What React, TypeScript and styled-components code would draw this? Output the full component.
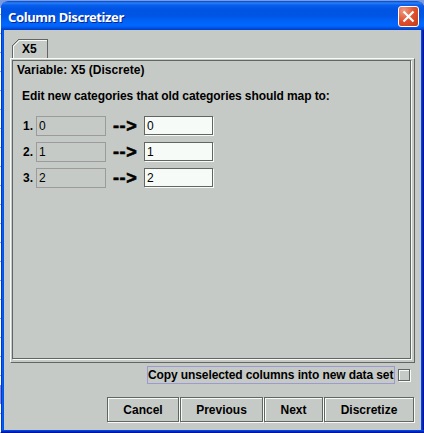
import React from "react";
import styled, { createGlobalStyle } from "styled-components";

const GlobalStyle = createGlobalStyle`
  * { box-sizing: border-box; }
  body { margin: 0; overflow: hidden; background: #fff; }
  button, input { font: inherit; border-radius: 0; appearance: none; }
`;

const face = "#c6cac6";
const dark = "#636563";
const light = "#f7fbf7";

const Desktop = styled.div`
  width: 424px;
  height: 433px;
  padding-left: 1px;
  overflow: hidden;
  background:
    linear-gradient(#7b9ae0, #7b9ae0) 0 0 / 100% 8px no-repeat,
    linear-gradient(#8e8cc8, #8e8cc8) 0 385px / 1px 19px no-repeat,
    repeating-linear-gradient(#fff 0 14px, #a5a6a5 14px 15px, #fff 15px 19px);
  font: bold 12px/14px "Liberation Sans", Arial, sans-serif;
  color: #000;
`;

const Window = styled.main`
  display: flex;
  flex-direction: column;
  margin-top: 1px;
  width: 423px;
  height: 432px;
  border-radius: 7px 7px 0 0;
  overflow: hidden;
  background: linear-gradient(90deg, #0034d6 0 1px, #0061f7 1px 2px, #0055e7 2px 3px, ${face} 3px 420px, #0045e7 420px 421px, #0028c6 421px 422px, #001694 422px);
`;

const TitleBar = styled.header`
  display: flex;
  flex: none;
  align-items: center;
  justify-content: space-between;
  height: 29px;
  padding: 0 5px 0 7px;
  background: linear-gradient(#0046c8 0, #2a80f8 2px, #0860ee 4px, #0054e3 8px, #0055e5 15px, #0064fa 21px, #0066ff 25px, #0052e0 27px, #003cc6 29px);
`;

const Title = styled.h1`
  margin: 3px 0 0;
  font: bold 13px/18px "Noto Sans", "Open Sans", sans-serif;
  letter-spacing: -0.38px;
  white-space: nowrap;
  color: #fff;
  text-shadow: 1px 1px 0 #06238c;
`;

const CloseButton = styled.button`
  display: grid;
  place-items: center;
  width: 21px;
  height: 21px;
  margin-top: 2px;
  padding: 0;
  border: 1px solid #fff;
  border-radius: 3px;
  background: radial-gradient(circle at 25% 20%, #ee9a80, #e05030 50%, #c43a12);
`;

const Body = styled.div`
  display: flex;
  flex: 1;
  flex-direction: column;
  margin: 0 3px;
  padding: 9px 6px 0;
`;

const Tab = styled.div`
  position: relative;
  width: 37px;
  height: 19px;
  margin-left: 2px;
  padding: 3px 0 0 10px;
`;

const TabOutline = styled.svg`
  position: absolute;
  left: 0;
  top: 0;
`;

const Panel = styled.section`
  width: 405px;
  height: 305px;
  padding: 1px;
  border: 1px solid;
  border-color: ${light} ${dark} ${dark} ${light};
`;

const etched = `
  border: 1px solid ${dark};
  box-shadow: 1px 1px 0 ${light}, inset 1px 1px 0 ${light};
`;

const PanelInner = styled.div`
  width: 399px;
  height: 299px;
  padding: 2px 4px;
  border: 1px solid ${dark};
  box-shadow: 1px 1px 0 ${light};
`;

const Label = styled.p<{ $spacing: number; $indent?: number; $top?: number }>`
  margin: ${(p) => p.$top ?? 0}px 0 0 ${(p) => p.$indent ?? 0}px;
  letter-spacing: ${(p) => p.$spacing}px;
  white-space: nowrap;
`;

const Rows = styled.div`
  display: grid;
  gap: 6px;
  margin: 13px 0 0 6px;
`;

const Row = styled.div`
  display: grid;
  grid-template-columns: 13px 70px 38px 70px;
  align-items: center;
  height: 20px;
`;

const Arrow = styled.span`
  padding-left: 7px;
  font-size: 18px;
  line-height: 18px;
  letter-spacing: 0.6px;
  white-space: nowrap;
  -webkit-text-stroke: 0.6px #000;
`;

const Field = styled.input`
  width: 69px;
  height: 19px;
  margin-bottom: 1px;
  padding: 1px 2px 0;
  outline: 0;
  border: 1px solid ${dark};
  box-shadow: 1px 1px 0 ${light};
  background: ${light};
  color: #000;
  font: 12px/14px "Liberation Sans", Arial, sans-serif;

  &:disabled {
    width: 70px;
    height: 20px;
    margin-bottom: 0;
    padding: 0 2px 1px;
    border-color: #9c9a9c;
    box-shadow: none;
    background: ${face};
  }
`;

const Option = styled.label`
  display: flex;
  align-items: center;
  justify-content: flex-end;
  gap: 3px;
  margin: 3px 4px 0 0;
`;

const OptionText = styled.span`
  width: 248px;
  height: 18px;
  padding: 1px 0 0;
  border: 1px solid #9c9ace;
  letter-spacing: -0.1px;
  white-space: nowrap;
`;

const CheckBox = styled.input`
  width: 12px;
  height: 12px;
  margin: 0 1px 0 0;
  ${etched}
`;

const Actions = styled.footer`
  display: flex;
  justify-content: flex-end;
  gap: 1px;
  margin: 13px 1px 0 0;
`;

const ActionButton = styled.button<{ $width: number }>`
  width: ${(p) => p.$width}px;
  height: 25px;
  padding: 1px 0 0;
  background: ${face};
  color: #000;
  white-space: nowrap;
  ${etched}
`;

const BottomEdge = styled.div`
  flex: none;
  height: 3px;
  background: linear-gradient(#0045e7 0 1px, #0028c6 1px 2px, #001694 2px);
`;

const categories = ["0", "1", "2"];
const actions = [
  { label: "Cancel", width: 72 },
  { label: "Previous", width: 83 },
  { label: "Next", width: 59 },
  { label: "Discretize", width: 90 },
];

export default function App() {
  return (
    <Desktop>
      <GlobalStyle />
      <Window>
        <TitleBar>
          <Title>Column Discretizer</Title>
          <CloseButton aria-label="Close">
            <svg width="13" height="13" viewBox="0 0 13 13">
              <path d="M1.5 1.5 11.5 11.5M11.5 1.5 1.5 11.5" stroke="#fff" strokeWidth="2.2" />
            </svg>
          </CloseButton>
        </TitleBar>
        <Body>
          <Tab>
            <TabOutline width="37" height="19" shapeRendering="crispEdges" fill="none">
              <path d="M1.5 19V7.5L7.5 1.5H35" stroke={light} />
              <path d="M0.5 19V6.5L6.5 0.5H35.5V19" stroke={dark} />
            </TabOutline>
            X5
          </Tab>
          <Panel>
            <PanelInner>
              <Label $spacing={0.03}>Variable: X5 (Discrete)</Label>
              <Label $spacing={-0.08} $indent={5} $top={12}>
                Edit new categories that old categories should map to:
              </Label>
              <Rows>
                {categories.map((value, i) => (
                  <Row key={value}>
                    <span>{i + 1}.</span>
                    <Field disabled defaultValue={value} />
                    <Arrow>--&gt;</Arrow>
                    <Field defaultValue={value} />
                  </Row>
                ))}
              </Rows>
            </PanelInner>
          </Panel>
          <Option>
            <OptionText>Copy unselected columns into new data set</OptionText>
            <CheckBox type="checkbox" />
          </Option>
          <Actions>
            {actions.map((a) => (
              <ActionButton key={a.label} $width={a.width}>
                {a.label}
              </ActionButton>
            ))}
          </Actions>
        </Body>
        <BottomEdge />
      </Window>
    </Desktop>
  );
}
